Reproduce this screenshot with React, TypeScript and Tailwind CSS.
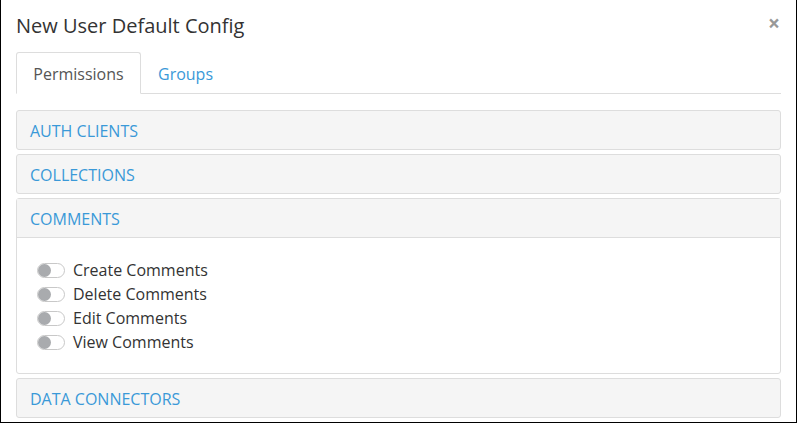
import React from "react";

const blue = "text-[#3a99d8]";

function Toggle() {
  return (
    <span className="relative inline-block w-[28px] h-[15px] rounded-full border border-[#c8c8c8] bg-white shrink-0">
      <span className="absolute left-[0px] top-[0px] w-[13px] h-[13px] rounded-full bg-[#a9abae]" />
    </span>
  );
}

function PanelHead({ title }: { title?: string }) {
  return (
    <div className="h-[40px] shrink-0 border border-[#dddddd] bg-[#f5f5f5] rounded-[3px] flex items-center pl-[13px] pt-[2px]">
      {title ? <span className={`text-[16px] ${blue}`}>{title}</span> : null}
    </div>
  );
}

export default function App() {
  const perms = ["Create Comments", "Delete Comments", "Edit Comments", "View Comments"];
  return (
    <div className="w-[798px] h-[425px] bg-white overflow-hidden" style={{ fontFamily: '"Open Sans", sans-serif' }}>
      <div className="w-[797px] h-[423px] border-l border-r border-b border-black overflow-hidden">
        <div className="h-[52px] pl-[15px] pr-[16px] flex items-start justify-between">
          <h4 className="mt-[12px] text-[20px] leading-[28px] text-[#333333]">New User Default Config</h4>
          <span className="mt-[9px] text-[21px] font-bold leading-[28px] text-[#999999]">×</span>
        </div>
        <div className="mx-[15px] border-b border-[#dddddd] flex h-[42px]">
          <div className="w-[125px] h-[42px] pt-[1px] border border-[#dddddd] border-b-white rounded-t-[3px] bg-white flex items-center justify-center text-[16px] text-[#555555]">
            Permissions
          </div>
          <div className={`ml-[2px] pl-[15px] pt-[1px] h-[42px] flex items-center text-[16px] ${blue}`}>Groups</div>
        </div>
        <div className="mx-[15px] mt-[16px] flex flex-col gap-[4px]">
          <PanelHead title="AUTH CLIENTS" />
          <PanelHead title="COLLECTIONS" />
          <div className="border border-[#dddddd] rounded-[3px]">
            <div className="h-[39px] pt-[2px] border-b border-[#dddddd] bg-[#f5f5f5] flex items-center pl-[13px]">
              <span className={`text-[16px] ${blue}`}>COMMENTS</span>
            </div>
            <div className="pt-[20px] pb-[19px] pl-[20px] flex flex-col">
              {perms.map((p) => (
                <div key={p} className="h-[24px] flex items-center gap-[8px]">
                  <Toggle />
                  <span className="text-[16px] text-[#333333]">{p}</span>
                </div>
              ))}
            </div>
          </div>
          <PanelHead title="DATA CONNECTORS" />
          <PanelHead />
        </div>
      </div>
    </div>
  );
}
